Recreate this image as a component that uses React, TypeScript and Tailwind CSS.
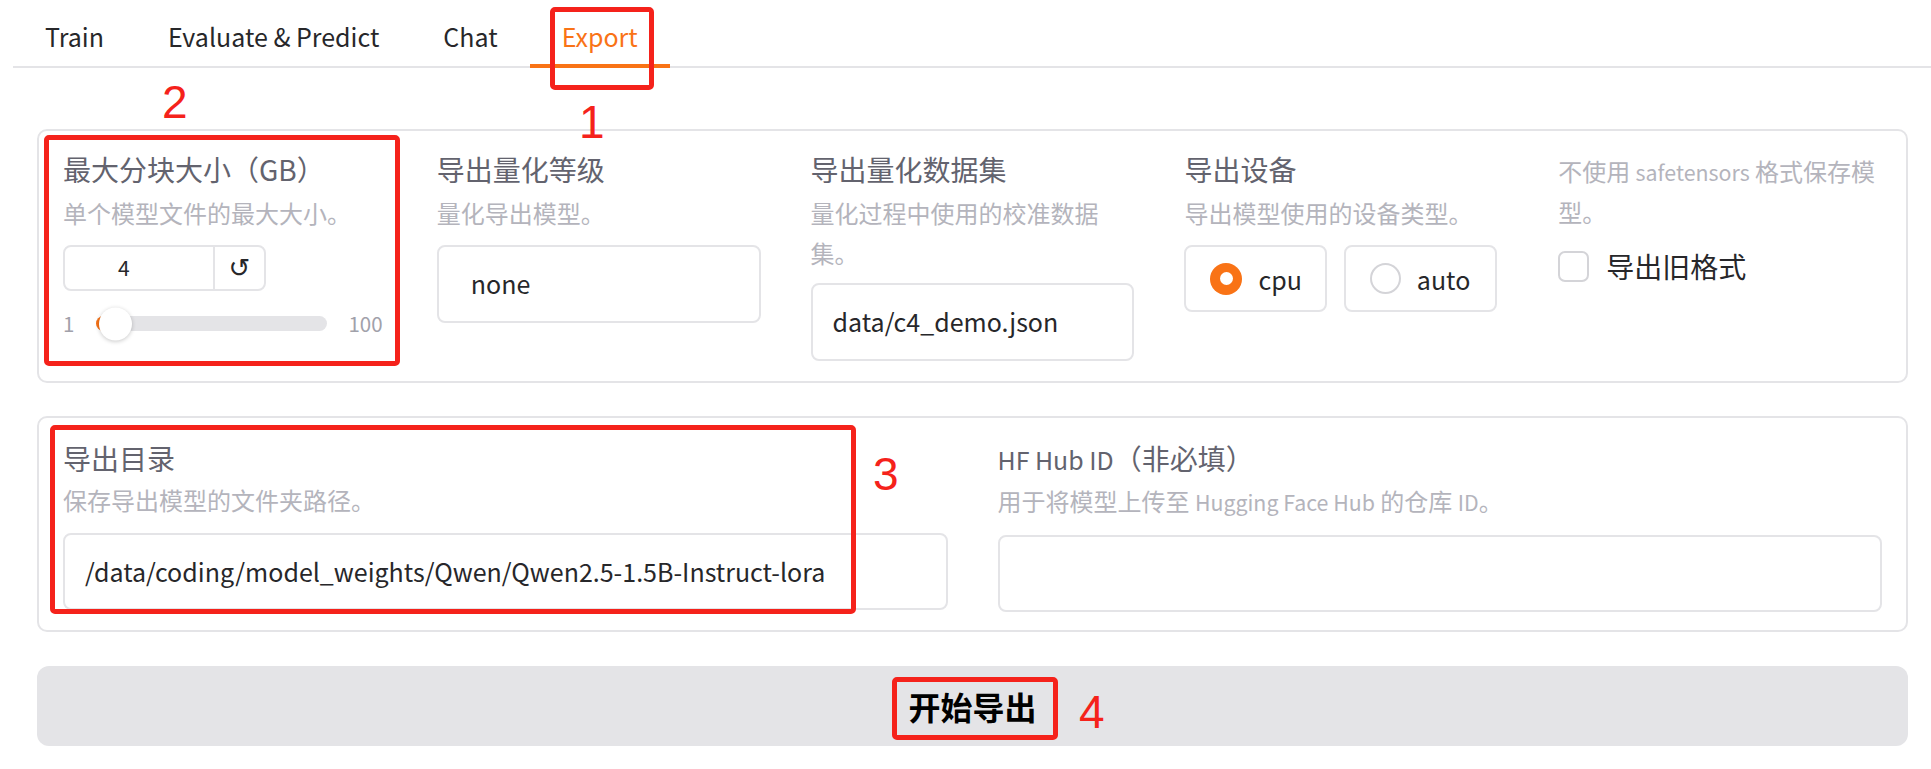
import React from "react";

const tabs = ["Train", "Evaluate & Predict", "Chat", "Export"];

function L({ children }: { children: React.ReactNode }) {
  return <span className="text-[0.89em]">{children}</span>;
}

function Label({ children }: { children: React.ReactNode }) {
  return <div className="text-[28px] leading-[40px] text-[#63636e] whitespace-nowrap">{children}</div>;
}

function Desc({ children, className = "" }: { children: React.ReactNode; className?: string }) {
  return <div className={"text-[24px] leading-[40px] text-[#b4b4bc] whitespace-nowrap " + className}>{children}</div>;
}

export default function App() {
  return (
    <div className="relative w-[1931px] h-[769px] overflow-hidden bg-white font-['Noto_Sans_CJK_SC',sans-serif]">
      {/* Tabs */}
      <div className="ml-[13px] flex border-b-2 border-[#e4e4e7]">
        {tabs.map((t) => {
          const active = t === "Export";
          return (
            <div
              key={t}
              className={
                "relative h-[66px] px-[32px] pt-[16px] text-[25px] leading-[40px] whitespace-nowrap " +
                (active ? "text-[#f97316]" : "text-[#27272a]")
              }
            >
              {t}
              {active && <span className="absolute left-0 right-0 bottom-[-2px] h-[4px] bg-[#f97316]" />}
            </div>
          );
        })}
      </div>

      <div className="ml-[37px] w-[1871px]">
        {/* Top panel */}
        <div className="mt-[61px] h-[254px] rounded-[10px] border-2 border-[#e4e4e7] px-[24px] pt-[18px] grid grid-cols-5 gap-x-[50px] items-start">
          {/* col 1 */}
          <div>
            <Label>最大分块大小（GB）</Label>
            <Desc className="mt-[4px]">单个模型文件的最大大小。</Desc>
            <div className="mt-[12px] flex h-[46px] w-[203px] rounded-[8px] border-2 border-[#e4e4e7]">
              <div className="flex flex-1 items-center pl-[53px] text-[21px] text-[#27272a]">4</div>
              <div className="flex w-[51px] items-center justify-center border-l-2 border-[#e4e4e7] text-[26px] text-[#27272a] font-['DejaVu_Sans',sans-serif]">
                ↺
              </div>
            </div>
            <div className="mt-[16px] flex h-[33px] items-center text-[20.5px] leading-none text-[#a1a1aa]">
              <span>1</span>
              <div className="relative ml-[22px] h-[15px] w-[231px] rounded-full bg-[#e4e4e7]">
                <div className="absolute left-0 top-0 h-full w-[22px] rounded-full bg-[#f97316]" />
                <div className="absolute left-[3px] top-1/2 h-[33px] w-[33px] -translate-y-1/2 rounded-full bg-white shadow-[0_1px_4px_rgba(0,0,0,0.22)]" />
              </div>
              <span className="ml-[21px]">100</span>
            </div>
          </div>

          {/* col 2 */}
          <div>
            <Label>导出量化等级</Label>
            <Desc className="mt-[4px]">量化导出模型。</Desc>
            <div className="mt-[12px] flex h-[78px] items-center rounded-[8px] border-2 border-[#e4e4e7] pl-[32px] text-[25px] text-[#27272a]">
              none
            </div>
          </div>

          {/* col 3 */}
          <div>
            <Label>导出量化数据集</Label>
            <Desc className="mt-[4px]">
              量化过程中使用的校准数据
              <br />
              集。
            </Desc>
            <div className="mt-[10px] flex h-[78px] items-center rounded-[8px] border-2 border-[#e4e4e7] pl-[20px] text-[25px] text-[#27272a]">
              data/c4_demo.json
            </div>
          </div>

          {/* col 4 */}
          <div>
            <Label>导出设备</Label>
            <Desc className="mt-[4px]">导出模型使用的设备类型。</Desc>
            <div className="mt-[12px] flex gap-[17px]">
              <div className="flex h-[67px] items-center gap-[16px] rounded-[8px] border-2 border-[#e4e4e7] pl-[24px] pr-[23px]">
                <div className="flex h-[32px] w-[32px] items-center justify-center rounded-full bg-[#f97316]">
                  <div className="h-[13px] w-[13px] rounded-full bg-white" />
                </div>
                <span className="text-[25px] leading-[40px] text-[#27272a]">cpu</span>
              </div>
              <div className="flex h-[67px] items-center gap-[16px] rounded-[8px] border-2 border-[#e4e4e7] pl-[24px] pr-[25px]">
                <div className="h-[31px] w-[31px] rounded-full border-2 border-[#d4d4d8] bg-white" />
                <span className="text-[25px] leading-[40px] text-[#27272a]">auto</span>
              </div>
            </div>
          </div>

          {/* col 5 */}
          <div>
            <Desc className="mt-[2px]">
              不使用 <L>safetensors</L> 格式保存模
              <br />
              型。
            </Desc>
            <div className="mt-[14px] flex items-center">
              <div className="h-[31px] w-[31px] rounded-[7px] border-2 border-[#d4d4d8] bg-white" />
              <span className="ml-[17px] text-[28px] leading-[40px] text-[#27272a]">导出旧格式</span>
            </div>
          </div>
        </div>

        {/* Bottom panel */}
        <div className="mt-[33px] h-[216px] rounded-[10px] border-2 border-[#e4e4e7] px-[24px] pt-[20px] grid grid-cols-2 gap-x-[50px] items-start">
          <div>
            <Label>导出目录</Label>
            <Desc className="mt-[2px]">保存导出模型的文件夹路径。</Desc>
            <div className="mt-[13px] flex h-[77px] items-center rounded-[8px] border-2 border-[#e4e4e7] pl-[20px] text-[25px] text-[#27272a] whitespace-nowrap">
              /data/coding/model_weights/Qwen/Qwen2.5-1.5B-Instruct-lora
            </div>
          </div>
          <div>
            <Label>
              <L>HF Hub ID</L>（非必填）
            </Label>
            <Desc className="mt-[2px]">
              用于将模型上传至 <L>Hugging Face Hub</L> 的仓库 <L>ID</L>。
            </Desc>
            <div className="mt-[13px] h-[77px] rounded-[8px] border-2 border-[#e4e4e7]" />
          </div>
        </div>

        {/* Button */}
        <div className="mt-[34px] flex h-[80px] items-center justify-center rounded-[12px] bg-[#e4e4e7] text-[32px] font-bold text-black">
          开始导出
        </div>
      </div>

      {/* Annotations */}
      <div className="pointer-events-none absolute left-[550px] top-[7px] h-[83px] w-[104px] rounded-[5px] border-[5px] border-[#f5221b]" />
      <div className="pointer-events-none absolute left-[44px] top-[135px] h-[231px] w-[356px] rounded-[5px] border-[5px] border-[#f5221b]" />
      <div className="pointer-events-none absolute left-[50px] top-[425px] h-[189px] w-[806px] rounded-[5px] border-[5px] border-[#f5221b]" />
      <div className="pointer-events-none absolute left-[892px] top-[677px] h-[63px] w-[166px] rounded-[5px] border-[5px] border-[#f5221b]" />

      <span className="absolute left-[579px] top-[99px] text-[46px] leading-none text-[#f5221b] font-['Liberation_Sans',sans-serif]">1</span>
      <span className="absolute left-[162px] top-[79px] text-[46px] leading-none text-[#f5221b] font-['Liberation_Sans',sans-serif]">2</span>
      <span className="absolute left-[873px] top-[451px] text-[46px] leading-none text-[#f5221b] font-['Liberation_Sans',sans-serif]">3</span>
      <span className="absolute left-[1079px] top-[689px] text-[46px] leading-none text-[#f5221b] font-['Liberation_Sans',sans-serif]">4</span>
    </div>
  );
}
